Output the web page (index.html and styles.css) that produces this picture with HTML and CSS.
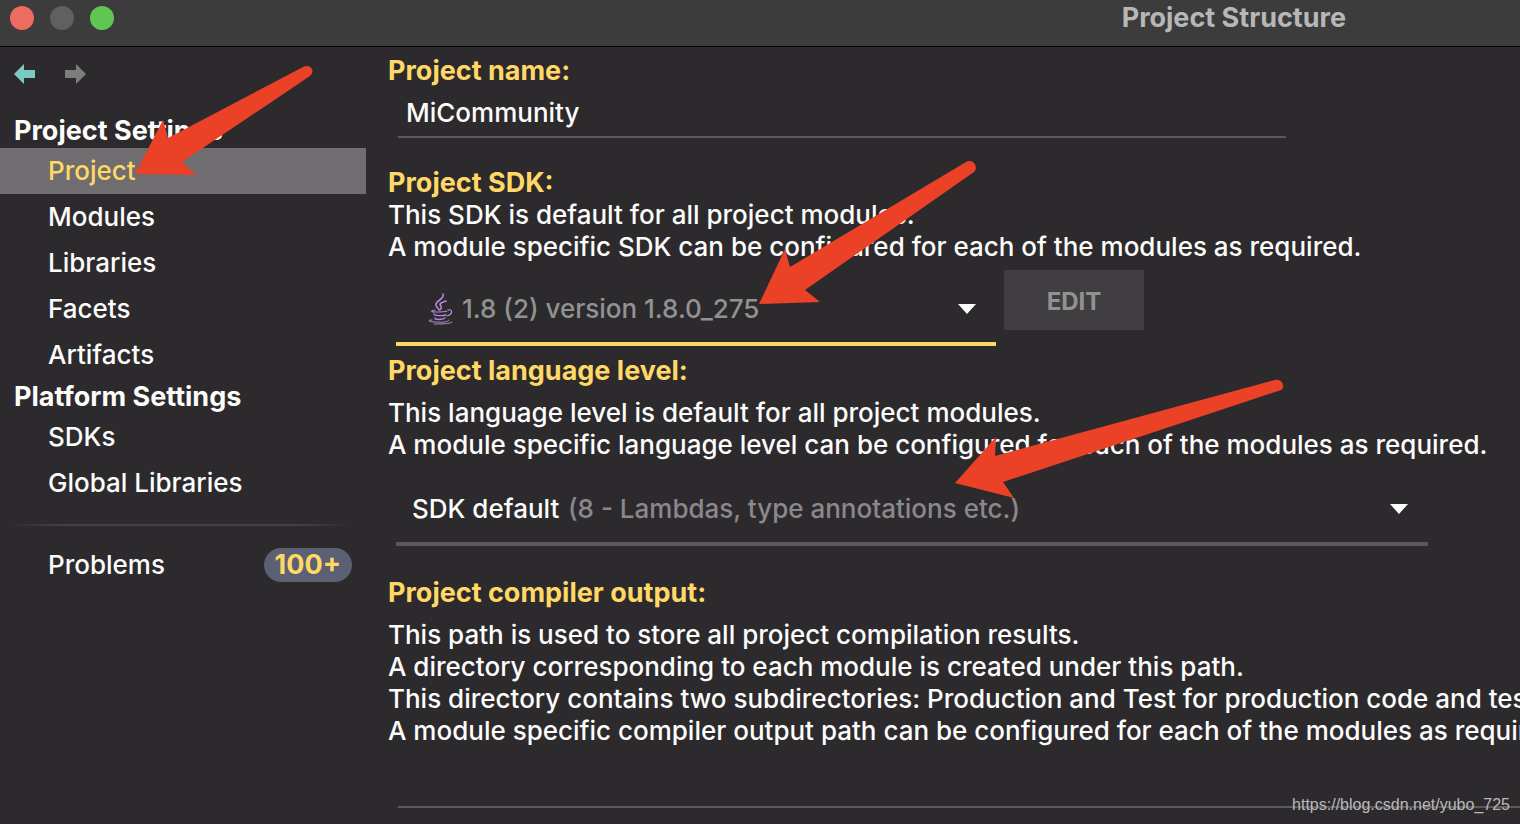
FILE: index.html
```html
<!DOCTYPE html>
<html lang="en">
<head>
    <meta charset="UTF-8">
    <meta name="viewport" content="width=device-width, initial-scale=1.0">
    <title>Project Structure</title>
    <link rel="stylesheet" href="styles.css">
</head>
<body>

<header class="titlebar">
    <span class="light close"></span>
    <span class="light minimize"></span>
    <span class="light zoom"></span>
    <h1>Project Structure</h1>
</header>

<div class="window">
    <nav class="sidebar">
        <div class="history">
            <button type="button" class="back" aria-label="Back">
                <svg width="22" height="20" viewBox="0 0 22 20"><path d="M0 10 10 0V6H21V14H10V20Z" fill="currentColor"/></svg>
            </button>
            <button type="button" class="forward" aria-label="Forward">
                <svg width="22" height="20" viewBox="0 0 22 20"><path d="M22 10 12 0V6H1V14H12V20Z" fill="currentColor"/></svg>
            </button>
        </div>

        <h2>Project Settings</h2>
        <a class="item selected" href="#project">Project</a>
        <a class="item" href="#modules">Modules</a>
        <a class="item" href="#libraries">Libraries</a>
        <a class="item" href="#facets">Facets</a>
        <a class="item" href="#artifacts">Artifacts</a>

        <h2>Platform Settings</h2>
        <a class="item" href="#sdks">SDKs</a>
        <a class="item" href="#global">Global Libraries</a>

        <hr>
        <a class="item" href="#problems">Problems <span class="count">100+</span></a>
    </nav>

    <main class="content" id="project">
        <label class="title" for="name">Project name:</label>
        <input class="field name" id="name" type="text" value="MiCommunity">

        <label class="title" for="sdk">Project SDK:</label>
        <p>This SDK is default for all project modules.<br>
        A module specific SDK can be configured for each of the modules as required.</p>
        <div class="sdk-row">
            <div class="combo sdk">
                <select id="sdk">
                    <option>1.8 (2) version 1.8.0_275</option>
                </select>
                <svg class="java" width="28" height="34" viewBox="0 0 28 34" fill="none" stroke="#b48ad8" stroke-linecap="round">
                    <path d="M16 2C18 7 8 9 9 13C9 15 12 17 12 18" stroke-width="1.6"/>
                    <path d="M19 9C13 11 12 12 14 14C15 16 14 17 13 18" stroke-width="1.6"/>
                    <path d="M8 18C3 19 4 20 9 20C13 20 17 20 20 19" stroke-width="1.2"/>
                    <path d="M21 18C26 17 26 22 20 24" stroke-width="1.2"/>
                    <path d="M7 22C7 24 16 24 19 23M8 26C8 28 15 28 18 26" stroke-width="1.4"/>
                    <path d="M5 28C0 28 1 30 9 30C17 31 23 29 22 28M7 32C15 32 23 32 25 30" stroke-width="1"/>
                </svg>
                <svg class="caret" width="18" height="10" viewBox="0 0 18 10"><path d="M0 0H18L9 10Z" fill="#fff"/></svg>
            </div>
            <button type="button" class="edit" disabled>EDIT</button>
        </div>

        <label class="title level-title" for="level">Project language level:</label>
        <p class="spaced">This language level is default for all project modules.<br>
        A module specific language level can be configured for each of the modules as required.</p>
        <div class="combo level">
            <select id="level">
                <option>SDK default</option>
            </select>
            <span class="hint">(8 - Lambdas, type annotations etc.)</span>
            <svg class="caret" width="18" height="10" viewBox="0 0 18 10"><path d="M0 0H18L9 10Z" fill="#fff"/></svg>
        </div>

        <label class="title output-title" for="output">Project compiler output:</label>
        <p class="spaced">This path is used to store all project compilation results.<br>
        A directory corresponding to each module is created under this path.<br>
        This directory contains two subdirectories: Production and Test for production code and test sources, respectively.<br>
        A module specific compiler output path can be configured for each of the modules as required.</p>
        <input class="field output" id="output" type="text">
    </main>
</div>

<!-- red pointers over the settings -->
<svg class="pointers" width="1520" height="824" viewBox="0 0 1520 824" fill="#eb4126" aria-hidden="true">
    <path d="M135 174 163 120 168 138 303 67C310 63 316 71 310 76L182 162 196 175Z"/>
    <path d="M759 304 785 249 790 267 966 162C973 158 979 167 974 172L805 290 820 302Z"/>
    <path d="M955 483 996 437 995 456 1275 380C1282 378 1286 387 1281 390L1003 482 1014 498Z"/>
</svg>

<span class="watermark">https://blog.csdn.net/yubo_725</span>

</body>
</html>
```

FILE: styles.css
```css
* { box-sizing: border-box; }
body { margin: 0; min-height: 100vh; overflow: hidden; background: #2d2a2e; color: #fcfcfa; font: 450 26px/32px Inter, "Liberation Sans", sans-serif; }
h1, h2, p { margin: 0; }
h1, h2, .title, .count { font-size: 27px; font-weight: 700; }
input, select, button { font: inherit; color: inherit; background: none; border: 0; border-radius: 0; padding: 0; margin: 0; }

.titlebar { display: flex; align-items: center; gap: 16px; height: 47px; padding: 0 174px 11px 10px; background: #3c3c3d; border-bottom: 1px solid #000; }
.titlebar h1 { margin-left: auto; color: #b8b7b8; }
.light { width: 24px; height: 24px; border-radius: 50%; }
.close { background: #ed6b60; }
.minimize { background: #606062; }
.zoom { background: #61c554; }

.window { display: flex; height: calc(100vh - 47px); overflow: hidden; }
.sidebar { flex: none; width: 366px; }
.history { display: flex; align-items: flex-start; gap: 28px; height: 65px; padding: 17px 14px; }
.history svg { display: block; }
.back { color: #7accc3; }
.forward { color: #7d7d7d; }
.sidebar h2 { padding: 3px 14px 1px; }
.item { display: flex; justify-content: space-between; align-items: center; height: 46px; padding: 0 14px 0 48px; color: inherit; text-decoration: none; }
.selected { background: #6f6d70; color: #ffd866; }
.sidebar hr { height: 2px; margin: 18px 14px 16px 8px; border: 0; background: linear-gradient(to right, transparent, #424043 15%, #424043 85%, transparent); }
.count { padding: 1px 11px; border-radius: 17px; background: #5b6073; color: #ffd866; }

.content { flex: 1; min-width: 0; padding: 8px 0 0 22px; white-space: nowrap; }
.title { display: block; color: #ffd866; }
.spaced { margin-top: 10px; }
.field { display: block; border-bottom: 2px solid #5b595c; margin-left: 10px; padding: 0 8px; outline: 0; }
.name { width: 888px; height: 49px; margin-top: 2px; margin-bottom: 29px; }
.output { width: calc(100% - 10px); height: 49px; margin-top: 12px; }

.combo { display: grid; align-items: center; height: 70px; margin-left: 8px; border-bottom: 4px solid #5b595c; }
.combo > * { grid-area: 1 / 1; }
.combo select { appearance: none; width: 100%; height: 66px; padding: 0 48px 0 16px; outline: 0; }
.caret { justify-self: end; margin-right: 20px; pointer-events: none; }
.sdk-row { display: flex; align-items: flex-end; gap: 8px; height: 76px; margin-top: 7px; }
.sdk { width: 600px; border-color: #ffd866; color: #939293; }
.combo.sdk select { padding-left: 66px; }
.java { margin-left: 31px; pointer-events: none; }
.edit { align-self: flex-start; width: 140px; height: 60px; padding-top: 3px; background: #403e41; color: #939293; font-size: 24px; font-weight: 700; }
.level-title { margin-top: 9px; }
.level { width: 1032px; margin-top: 15px; }
.hint { margin-left: 172px; color: #8a888b; pointer-events: none; }
.output-title { margin-top: 31px; }

.pointers { position: absolute; top: 0; left: 0; pointer-events: none; }
.watermark { position: absolute; right: 10px; bottom: 8px; color: #bab9ba; font: 16px/22px "Liberation Sans", Arial, sans-serif; }
```
